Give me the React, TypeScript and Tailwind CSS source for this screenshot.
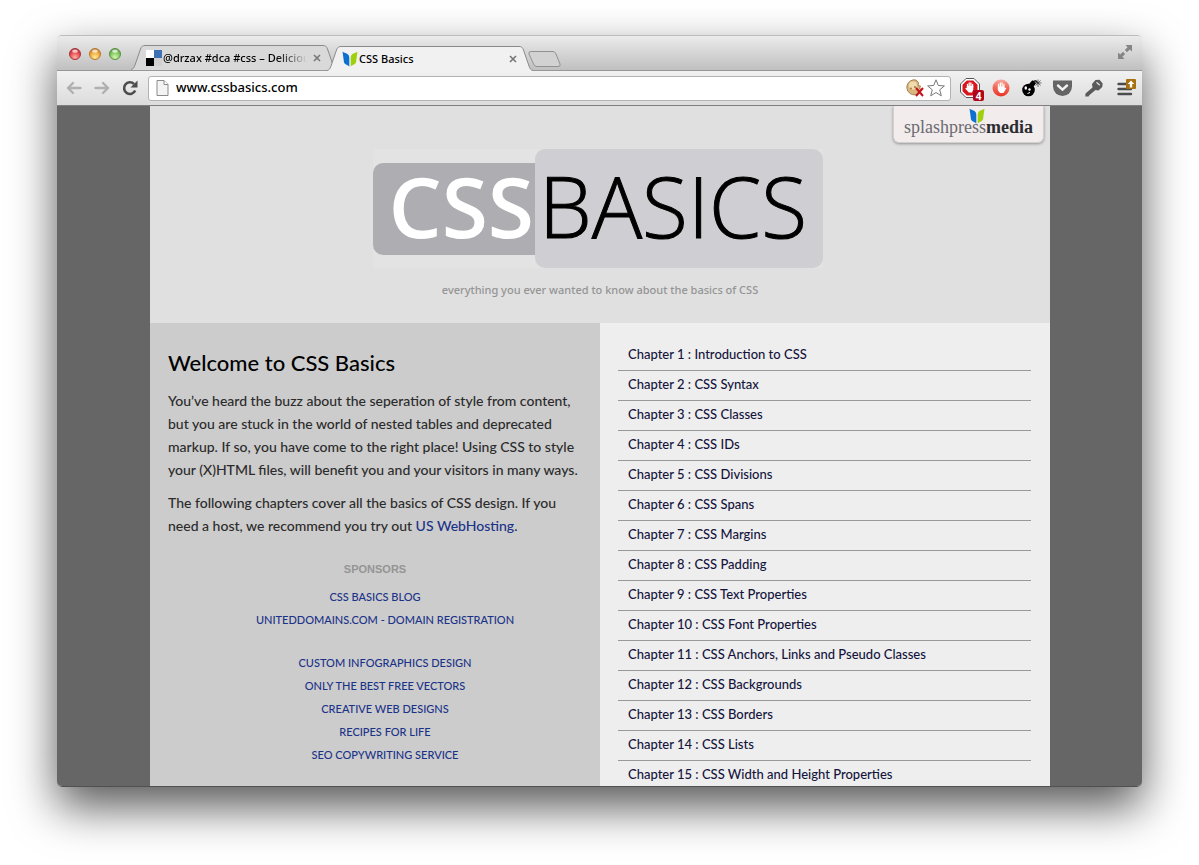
import type { ReactNode } from "react";

const chapters = [
  "Introduction to CSS",
  "CSS Syntax",
  "CSS Classes",
  "CSS IDs",
  "CSS Divisions",
  "CSS Spans",
  "CSS Margins",
  "CSS Padding",
  "CSS Text Properties",
  "CSS Font Properties",
  "CSS Anchors, Links and Pseudo Classes",
  "CSS Backgrounds",
  "CSS Borders",
  "CSS Lists",
  "CSS Width and Height Properties",
];

const sponsors = [
  "CUSTOM INFOGRAPHICS DESIGN",
  "ONLY THE BEST FREE VECTORS",
  "CREATIVE WEB DESIGNS",
  "RECIPES FOR LIFE",
  "SEO COPYWRITING SERVICE",
];

function Light({ label, edge, mid, glow }: { label: string; edge: string; mid: string; glow: string }) {
  const id = `light-${label}`;
  return (
    <button type="button" aria-label={label} className="size-3">
      <svg viewBox="0 0 12 12" className="size-3">
        <defs>
          <radialGradient id={id} cx="0.5" cy="0.8" r="0.8">
            <stop offset="0" stopColor={glow} />
            <stop offset="0.6" stopColor={mid} />
            <stop offset="1" stopColor={edge} />
          </radialGradient>
        </defs>
        <circle cx="6" cy="6" r="5.5" fill={`url(#${id})`} stroke={edge} />
        <ellipse cx="6" cy="3.2" rx="2.8" ry="1.6" fill="#fff" opacity="0.7" />
      </svg>
    </button>
  );
}

function Leaf({ className }: { className: string }) {
  return (
    <svg viewBox="0 0 16 16" className={className} aria-hidden="true">
      <path d="M0.5 0.5 C2 2 5.5 2 6.8 4.5 Q7.3 5.5 7.3 7 L7.3 15.5 C5 13.5 1.8 13.5 1.8 10 Z" fill="#0d70cf" />
      <path d="M15.5 0.5 C14 2 10.5 2 9.2 4.500 Q8.700 5.500 8.700 7 L8.700 15.500 C11 13.500 14.200 13.500 14.200 10 Z" fill="#9fd00f" />
    </svg>
  );
}

function Tab({
  title,
  icon,
  active,
  className,
}: {
  title: string;
  icon: ReactNode;
  active?: boolean;
  className: string;
}) {
  const fill = active ? "#f1f1f1" : "#d9d9d9";
  return (
    <div className={`flex h-[25px] ${className}`}>
      <svg viewBox="0 0 14 25" className="h-[25px] w-[14px] shrink-0" aria-hidden="true">
        <path d="M0 25 V24.5 C2.5 24 3 22.5 4 20 L9.5 4 C10.5 1.5 11.5 0.5 14 0.5 V25 Z" fill={fill} />
        <path d="M0 24.5 C2.5 24 3 22.5 4 20 L9.5 4 C10.5 1.5 11.5 0.5 14 0.5" fill="none" stroke="#8a8a8a" />
      </svg>
      <div
        className={`flex min-w-0 flex-1 items-center border-t border-[#8a8a8a] pl-px ${active ? "bg-[#f1f1f1]" : "bg-[#d9d9d9]"}`}
      >
        {icon}
        <span
          className={`ml-px min-w-0 flex-1 overflow-hidden text-[11px] font-medium whitespace-nowrap ${
            active ? "" : "bg-linear-to-r from-black from-75% to-[#d9d9d9] bg-clip-text text-transparent"
          }`}
        >
          {title}
        </span>
        <button type="button" aria-label={`Close ${title}`} className="ml-1 flex size-3 shrink-0 items-center justify-center">
          <svg viewBox="0 0 8 8" className="size-2" stroke="#777" strokeWidth="1.6">
            <path d="M1 1 L7 7 M7 1 L1 7" />
          </svg>
        </button>
      </div>
      <svg viewBox="0 0 14 25" className="h-[25px] w-[14px] shrink-0" aria-hidden="true">
        <path d="M14 25 V24.5 C11.5 24 11 22.500 10 20 L4.500 4 C3.500 1.500 2.500 0.500 0 0.500 V25 Z" fill={fill} />
        <path d="M14 24.500 C11.500 24 11 22.500 10 20 L4.500 4 C3.500 1.500 2.500 0.500 0 0.500" fill="none" stroke="#8a8a8a" />
      </svg>
    </div>
  );
}

function TitleBar() {
  return (
    <div className="flex h-[35px] shrink-0 items-end border-b border-[#979797] bg-linear-to-b from-[#ebebeb] to-[#c0c0c0] pl-3">
      <div className="mb-[10px] flex gap-2">
        <Light label="Close" edge="#a8343a" mid="#e8474b" glow="#ffb3a8" />
        <Light label="Minimise" edge="#b5782f" mid="#f0a83a" glow="#ffec9c" />
        <Light label="Zoom" edge="#5a8f45" mid="#7fc55e" glow="#d5f7ae" />
      </div>
      <Tab
        title="@drzax #dca #css – Delicious"
        className="ml-[10px] w-[206px]"
        icon={
          <svg viewBox="0 0 16 16" className="size-4 shrink-0" aria-hidden="true">
            <rect width="8" height="8" fill="#fff" />
            <rect x="8" width="8" height="8" fill="#3f72b5" />
            <rect y="8" width="8" height="8" fill="#000" />
            <rect x="8" y="8" width="8" height="8" fill="#d0d0d0" />
          </svg>
        }
      />
      <Tab
        title="CSS Basics"
        active
        className="relative -mb-px -ml-[10px] w-[206px]"
        icon={<Leaf className="size-4 shrink-0" />}
      />
      <button type="button" aria-label="New tab" className="-ml-[5px] mb-[3px] h-4 w-[33px]">
        <svg viewBox="0 0 33 16" className="h-4 w-[33px]">
          <path
            d="M3 0.5 H25 Q27 0.5 28 3 L32 13 Q33 15.5 30 15.5 H9 Q6.500 15.5 5.500 13 L1 3 Q0.200 0.500 3 0.500 Z"
            fill="#d2d2d2"
            stroke="#929292"
          />
        </svg>
      </button>
      <button type="button" aria-label="Full screen" className="mr-[9px] mb-[10px] ml-auto size-4">
        <svg viewBox="0 0 16 16" className="size-4" fill="#858585">
          <path d="M8.500 1 H15 V7.500 L12.800 5.400 L10 8.200 L7.800 6 L10.600 3.200 Z" />
          <path d="M7.500 15 H1 V8.500 L3.200 10.600 L6 7.800 L8.200 10 L5.400 12.800 Z" />
        </svg>
      </button>
    </div>
  );
}

function Toolbar() {
  return (
    <div className="flex h-[35px] shrink-0 items-center border-b border-[#7f7f7f] bg-linear-to-b from-[#f1f1f1] to-[#dcdcdc] pr-[6px] pl-[9px]">
      <button type="button" aria-label="Back" className="size-4">
        <svg viewBox="0 0 16 16" className="size-4" fill="none" stroke="#b0b0b0" strokeWidth="2.400" strokeLinecap="round" strokeLinejoin="round">
          <path d="M14.500 8 H2 M7 3 L2 8 L7 13" />
        </svg>
      </button>
      <button type="button" aria-label="Forward" className="ml-3 size-4">
        <svg viewBox="0 0 16 16" className="size-4" fill="none" stroke="#b0b0b0" strokeWidth="2.400" strokeLinecap="round" strokeLinejoin="round">
          <path d="M1.500 8 H14 M9 3 L14 8 L9 13" />
        </svg>
      </button>
      <button type="button" aria-label="Reload" className="ml-3 size-4">
        <svg viewBox="0 0 16 16" className="size-4">
          <path d="M13.200 10.500 A5.800 5.800 0 1 1 12 4" fill="none" stroke="#4d4d4d" strokeWidth="2.600" />
          <path d="M15.500 0.500 V7.500 H8.500 Z" fill="#4d4d4d" />
        </svg>
      </button>
      <div className="ml-[10px] flex h-[25px] min-w-0 flex-1 items-center rounded-[3px] border border-[#b2b2b2] bg-white pr-[5px] pl-[7px]">
        <svg viewBox="0 0 13 16" className="h-4 w-[13px] shrink-0" aria-hidden="true">
          <path d="M1 0.500 H8 L12 4.500 V15.500 H1 Z" fill="#f4f4f4" stroke="#8b8b8b" />
          <path d="M8 0.500 V4.500 H12" fill="#fff" stroke="#8b8b8b" />
        </svg>
        <input
          aria-label="Address"
          defaultValue="www.cssbasics.com"
          className="ml-[7px] min-w-0 flex-1 bg-transparent text-[13px] font-medium text-black outline-none"
        />
        <button type="button" aria-label="Cookies blocked" className="size-[18px]">
          <svg viewBox="0 0 18 18" className="size-[18px]">
            <path
              d="M10 1 A7.500 7.500 0 1 0 15.500 10.500 L13.500 9.500 L14.500 7 L12 6.500 L12.500 3.500 Z"
              fill="#d9b880"
              stroke="#a58350"
            />
            <circle cx="7" cy="6.500" r="4" fill="#f0dcb0" />
            <circle cx="5" cy="9.500" r="1" fill="#a67c45" />
            <circle cx="9" cy="8" r="0.900" fill="#8a6231" />
            <path d="M10 9 L17 17 M17 9 L10 17" stroke="#c4131a" strokeWidth="2" />
          </svg>
        </button>
        <button type="button" aria-label="Bookmark" className="ml-[3px] size-[18px]">
          <svg viewBox="0 0 18 18" className="size-[18px]">
            <path
              d="M9 0.800 L11.300 6.500 L17.400 6.900 L12.700 10.800 L14.300 16.800 L9 13.500 L3.700 16.800 L5.300 10.800 L0.600 6.900 L6.700 6.500 Z"
              fill="#fff"
              stroke="#777"
              strokeLinejoin="round"
            />
          </svg>
        </button>
      </div>
      <button type="button" aria-label="AdBlock, 4 blocked" className="relative ml-[9px] size-5">
        <svg viewBox="0 0 20 20" className="size-5">
          <path d="M6 0.500 H14 L19.500 6 V14 L14 19.500 H6 L0.500 14 V6 Z" fill="#fff" stroke="#555" />
          <path d="M6.800 2.500 H13.200 L17.500 6.800 V13.200 L13.200 17.500 H6.800 L2.500 13.200 V6.800 Z" fill="#d8161d" />
          <path
            d="M7.500 9 V6.500 M9.200 8.500 V4.800 M10.900 8.500 V4.800 M12.600 9 V6.500"
            stroke="#fff"
            strokeWidth="1.300"
            strokeLinecap="round"
            fill="none"
          />
          <path d="M6.800 8 H13.300 V11.500 L12 14.500 H8.800 L5.200 10.500 L6 9.800 L6.800 10.300 Z" fill="#fff" />
        </svg>
        <span className="absolute top-[12px] left-[13px] flex h-[11px] w-[11px] items-center justify-center rounded-[2px] bg-[#b1061a] text-[10px] leading-none font-bold text-white">
          4
        </span>
      </button>
      <button type="button" aria-label="Stop" className="ml-3 size-[18px]">
        <svg viewBox="0 0 18 18" className="size-[18px]">
          <defs>
            <linearGradient id="hand" x2="0" y2="1">
              <stop offset="0" stopColor="#f7aaa0" />
              <stop offset="0.450" stopColor="#f2695a" />
              <stop offset="1" stopColor="#e93323" />
            </linearGradient>
          </defs>
          <circle cx="9" cy="9" r="8.500" fill="url(#hand)" />
          <path
            d="M6.500 8 V5.500 M8.300 7.500 V4 M10.100 7.500 V4 M11.900 8 V5.500"
            stroke="#fff"
            strokeWidth="1.300"
            strokeLinecap="round"
            fill="none"
          />
          <path d="M5.800 7.500 H12.600 V9.500 L14 8.500 L14.300 9.300 L11.500 14 H8 L5.800 11 Z" fill="#fff" />
        </svg>
      </button>
      <button type="button" aria-label="Bomb" className="ml-3 h-[18px] w-5">
        <svg viewBox="0 0 20 18" className="h-[18px] w-5">
          <circle cx="6.500" cy="11" r="6.300" fill="#000" />
          <rect x="8" y="2.500" width="5" height="5" transform="rotate(40 11 5)" fill="#000" />
          <path d="M11 3 Q14 0.500 15.500 4" fill="none" stroke="#000" strokeWidth="1.300" />
          <path
            d="M16 0.500 V8 M12.800 4 H19.500 M13.800 1.500 L18.500 6.500 M18.500 1.500 L13.800 6.500"
            stroke="#333"
            strokeWidth="0.700"
          />
          <ellipse cx="3.800" cy="9" rx="1.300" ry="1.700" fill="#fff" />
          <circle cx="7.500" cy="10.500" r="1.200" fill="#fff" />
          <path d="M5.500 14.500 L8 13.500" stroke="#fff" />
        </svg>
      </button>
      <button type="button" aria-label="Pocket" className="ml-[11px] h-4 w-[19px]">
        <svg viewBox="0 0 19 16" className="h-4 w-[19px]">
          <path d="M0 0.500 H19 V6.500 A9.500 9.500 0 0 1 0 6.500 Z" fill="#656565" />
          <path d="M5 5.500 L9.500 9.700 L14 5.500" fill="none" stroke="#f2f2f2" strokeWidth="2.400" strokeLinecap="round" />
        </svg>
      </button>
      <button type="button" aria-label="Passwords" className="ml-[13px] size-[18px]">
        <svg viewBox="0 0 18 18" className="size-[18px]">
          <path
            d="M7 5 L10.500 1 L14.500 0.800 L17.700 4.500 L17.200 8 L13.500 11.500 L10.500 11 L4.500 16 L3.500 17.500 L0.300 17.500 L0.500 14.500 L7.500 8.500 Z"
            fill="#5a5a5a"
          />
          <path d="M11.500 3.200 L14.800 6.200" stroke="#d8d8d8" strokeWidth="1.500" />
        </svg>
      </button>
      <button type="button" aria-label="Menu, update available" className="ml-[14px] size-[19px]">
        <svg viewBox="0 0 19 19" className="size-[19px]">
          <path d="M1.500 5 H10 M1.500 10 H14 M1.500 15 H14" stroke="#4c4c4c" strokeWidth="2.400" strokeLinecap="round" />
          <rect x="9" y="0" width="10" height="10" rx="1" fill="#a8700f" />
          <path d="M14 1.500 L17.300 5 H15.200 V8.500 H12.800 V5 H10.700 Z" fill="#fff" />
        </svg>
      </button>
    </div>
  );
}

function Header() {
  return (
    <header className="flex flex-col bg-[#e0e0e0]">
      <div className="flex h-[43px] justify-end pr-[6px]">
        <a
          href="#splashpress"
          className="relative flex h-[37px] w-[151px] items-end justify-center rounded-b-md border border-t-0 border-[#d2cfcf] bg-[#f2eced] pb-[5px] font-['Liberation_Serif',serif] text-[18px] leading-[20px] text-[#6b6b70] shadow-[0_1px_3px_rgba(0,0,0,0.35)]"
        >
          <Leaf className="absolute top-[2px] left-[75px] size-4" />
          <span className="relative">
            splashpress<b className="text-[#2c2c30]">media</b>
          </span>
        </a>
      </div>
      <div className="flex justify-center pr-1">
        <h1 className="flex h-[119px] w-[450px] items-center bg-[#e3e3e3] font-['Open_Sans',sans-serif] text-[84px] leading-none">
          <span className="flex h-[92px] w-[162px] items-center justify-end rounded-l-[10px] bg-[#aeadb2] pr-px pb-[6px] font-semibold text-white">
            CSS
          </span>
          <span className="flex h-[119px] flex-1 items-center justify-center rounded-[10px] bg-[#cfced3] pr-3 pb-[6px] font-light text-black [-webkit-text-stroke:1px_black]">
            BASICS
          </span>
        </h1>
      </div>
      <p className="py-3 pb-[23px] text-center font-['Noto_Sans',sans-serif] text-[11px] leading-[20px] font-medium text-[#949494]">
        everything you ever wanted to know about the basics of CSS
      </p>
    </header>
  );
}

export default function App() {
  return (
    <div className="h-screen bg-white px-[57px] pt-[35px] pb-[78px] font-['Noto_Sans',sans-serif]">
      <div className="flex h-full flex-col overflow-hidden rounded-[5px] border-t border-b border-t-[#bcbcbc] border-b-[#505050] shadow-[0_20px_46px_rgba(0,0,0,0.66)]">
        <TitleBar />
        <Toolbar />
        <div className="min-h-0 flex-1 overflow-hidden bg-[#666] pl-px">
          <div className="mx-auto max-w-[900px]">
            <Header />
            <div className="grid grid-cols-2 font-[Lato,sans-serif]">
              <main className="bg-[#ccc] px-[18px] pt-6">
                <h2 className="text-[22px] leading-[32px] font-medium text-black">Welcome to CSS Basics</h2>
                <div className="mt-[10px] flex flex-col gap-[10px] text-[14px] leading-[23px] font-medium text-[#2b2b2b]">
                  <p>
                    You’ve heard the buzz about the seperation of style from content, but you are stuck in the world
                    of nested tables and deprecated markup. If so, you have come to the right place! Using CSS to
                    style your (X)HTML files, will benefit you and your visitors in many ways.
                  </p>
                  <p>
                    The following chapters cover all the basics of CSS design. If you need a host, we recommend you
                    try out{" "}
                    <a href="#hosting" className="text-[#1a3288]">
                      US WebHosting
                    </a>
                    .
                  </p>
                </div>
                <h3 className="mt-[21px] text-center font-['Liberation_Sans',sans-serif] text-[11px] leading-[23px] font-bold text-[#949494]">
                  SPONSORS
                </h3>
                <div className="mt-1 text-center text-[11px] leading-[23px] font-medium text-[#1a3288]">
                  <p>
                    <a href="#blog">CSS BASICS BLOG</a>
                  </p>
                  <p className="pl-5">
                    <a href="#domains">UNITEDDOMAINS.COM - DOMAIN REGISTRATION</a>
                  </p>
                  <ul className="mt-5 pl-5">
                    {sponsors.map((name) => (
                      <li key={name}>
                        <a href="#sponsor">{name}</a>
                      </li>
                    ))}
                  </ul>
                </div>
              </main>
              <nav aria-label="Chapters" className="bg-[#eee] pt-[18px] pr-[19px] pl-[18px]">
                <ul>
                  {chapters.map((title, i) => (
                    <li key={title} className="border-b border-[#999]">
                      <a
                        href={`#chapter-${i + 1}`}
                        className="block px-[10px] pb-[3px] text-[13px] leading-[26px] font-medium text-[#14143c]"
                      >
                        Chapter {i + 1} : {title}
                      </a>
                    </li>
                  ))}
                </ul>
              </nav>
            </div>
          </div>
        </div>
      </div>
    </div>
  );
}
